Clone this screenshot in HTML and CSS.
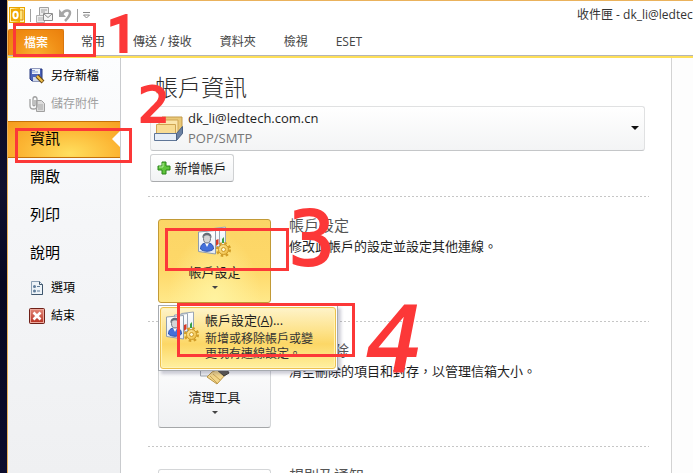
FILE: index.html
```html
<!DOCTYPE html>
<html lang="zh-Hant">
<head>
<meta charset="utf-8">
<title>收件匣 - dk_li@ledtech.com.cn</title>
<link rel="stylesheet" href="styles.css">
</head>
<body>
<svg class="defs" aria-hidden="true">
  <defs>
    <linearGradient id="cardFill" x1="0" y1="0" x2="0" y2="1"><stop offset="0" stop-color="#ffffff"/><stop offset="1" stop-color="#e4ebf4"/></linearGradient>
    <linearGradient id="goldFill" x1="0" y1="0" x2="1" y2="1"><stop offset="0" stop-color="#ffeaa0"/><stop offset="1" stop-color="#eebb3c"/></linearGradient>
    <linearGradient id="redFill" x1="0" y1="0" x2="0" y2="1"><stop offset="0" stop-color="#e58b7c"/><stop offset="1" stop-color="#b52c1d"/></linearGradient>
    <symbol id="accounts" viewBox="0 0 34 32">
      <path d="M15.500 2.500l12-1.500v18l-12 2z" fill="url(#cardFill)" stroke="#9aa6b5"/>
      <path d="M24 13l2-2v6h-2z" fill="#3ba044"/>
      <path d="M8.500 4l13-1.500v18l-13 2z" fill="url(#cardFill)" stroke="#9aa6b5"/>
      <path d="M18 14l2.500-1v5l-2.500 2z" fill="#d63b28"/>
      <path d="M.5 6l17-1.500v23.500l-17-2.500z" fill="url(#cardFill)" stroke="#8f9dae"/>
      <path d="M2.500 23c0-4 2-6 6.500-6s6.500 2 6.500 6c-3 3-10 3-13 0z" fill="#4470da" stroke="#2c52ad"/>
      <path d="M7 17h4l-2 4z" fill="#fff"/>
      <ellipse cx="9" cy="12.500" rx="3.500" ry="4.500" fill="#d4d4d6" stroke="#70757d"/>
      <path d="M4.500 12c-1-7 10-7 9 0-1-3-7-4-9 0z" fill="#666d77"/>
      <circle cx="25.500" cy="23.500" r="6.300" fill="none" stroke="#d19d28" stroke-width="2.500" stroke-dasharray="2.500 2.450"/>
      <circle cx="25.500" cy="23.500" r="5" fill="url(#goldFill)" stroke="#cd9823"/>
      <circle cx="25.500" cy="23.500" r="2" fill="#fff7d0" stroke="#cd9823"/>
    </symbol>
  </defs>
</svg>

<div class="window">
  <header class="titlebar">
    <div class="quick">
      <svg width="16" height="16" viewBox="0 0 16 16" aria-hidden="true">
        <rect x=".5" y=".5" width="15" height="15" fill="#fff3b5" stroke="#e9a400"/>
        <path d="M2 2l9-1v14l-9-1z" fill="#f0a800"/>
        <path d="M11 3h3v10h-3" fill="#ffe27a" stroke="#d99000"/>
        <ellipse cx="6.500" cy="8" rx="2.200" ry="3.200" fill="none" stroke="#fff" stroke-width="2"/>
      </svg>
      <i class="sep"></i>
      <button class="tool" aria-label="傳送/接收所有資料夾">
        <svg width="17" height="16" viewBox="0 0 17 16"><path d="M3.500.5h9v8h-9z" fill="#ededed" stroke="#a0a0a0"/><path d="M5 3h6M5 5h4" stroke="#a0a0a0"/><path d="M.5 8.500h8v7h-8z" fill="#ededed" stroke="#b0b0b0"/><path d="M2 11h5M2 13h5" stroke="#b0b0b0"/><path d="M7.500 6.500h9v7h-9z" fill="#f6f6f6" stroke="#8d8d8d"/><path d="M8 7l4 3.500L16 7" fill="none" stroke="#8d8d8d"/></svg>
      </button>
      <button class="tool" aria-label="復原">
        <svg width="14" height="14" viewBox="0 0 14 14"><path d="M4 6c3-5 8-4 8-1 0 3-2 5-5 8" fill="none" stroke="#a6a6a6" stroke-width="2.500"/><path d="M1 1v8h7z" fill="#a6a6a6"/></svg>
      </button>
      <i class="sep"></i>
      <button class="tool" aria-label="自訂快速存取工具列">
        <svg width="7" height="7" viewBox="0 0 7 7"><path d="M0 .5h7" stroke="#888"/><path d="M.5 3h6l-3 3z" fill="#fff" stroke="#888"/></svg>
      </button>
    </div>
    <div class="caption">收件匣 - dk_li@ledtech.com.cn</div>
  </header>

  <nav class="tabs">
    <button class="tab file">檔案</button>
    <button class="tab">常用</button>
    <button class="tab">傳送 / 接收</button>
    <button class="tab">資料夾</button>
    <button class="tab">檢視</button>
    <button class="tab">ESET</button>
  </nav>

  <div class="backstage">
    <aside class="side">
      <button class="cmd">
        <svg width="16" height="16" viewBox="0 0 16 16"><path d="M1 1h12v12H3l-2-2z" fill="#4a62b8" stroke="#26387f"/><path d="M3 1h8v5H3z" fill="#eef3fb"/><path d="M4 9h6v4H4z" fill="#cfd8ea"/><path d="M8 8l6 6" stroke="#6b4a12" stroke-width="4"/><path d="M8 8l5.500 5.500" stroke="#f0c04a" stroke-width="2"/><path d="M3 4h6M3 2.500h3" stroke="#8ba0d4"/></svg>
        另存新檔
      </button>
      <button class="cmd" disabled>
        <svg width="16" height="16" viewBox="0 0 16 16"><path d="M7.500 4.500h5l3 3v8h-8z" fill="#dcdcdc" stroke="#a0a0a0"/><path d="M9 9h5M9 11h5M9 13h5" stroke="#a8a8a8"/><path d="M1 3v7c0 4 7 4 7 0V3c0-3-4-3-4 0v6c0 1 2 1 2 0V4" fill="none" stroke="#a0a0a0" stroke-width="1.300"/></svg>
        儲存附件
      </button>
      <div class="places">
        <button class="place current">資訊</button>
        <button class="place">開啟</button>
        <button class="place">列印</button>
        <button class="place">說明</button>
      </div>
      <button class="cmd">
        <svg width="16" height="16" viewBox="0 0 16 16"><path d="M2.500 1.500h8l3 3v10h-11z" fill="#edf3f8" stroke="#8ba0b5"/><path d="M10.500 1.500v3h3v10h-11" fill="none" stroke="#3f566d"/><circle cx="5.500" cy="6.500" r="1.500" fill="#5f7d9b"/><circle cx="5.500" cy="11" r="1.500" fill="#5f7d9b"/><path d="M8 6.500h3M8 11h3" stroke="#5f7d9b"/></svg>
        選項
      </button>
      <button class="cmd">
        <svg width="16" height="16" viewBox="0 0 16 16"><rect x=".5" y=".5" width="15" height="15" rx="1" fill="url(#redFill)" stroke="#6e2018"/><rect x="1.500" y="1.500" width="13" height="13" fill="none" stroke="#eda89c"/><path d="M4.500 4.500l7 7M11.500 4.500l-7 7" stroke="#fff" stroke-width="2.600"/></svg>
        結束
      </button>
    </aside>

    <main class="main">
      <h1>帳戶資訊</h1>
      <button class="account" aria-haspopup="listbox">
        <svg width="30" height="32" viewBox="0 0 30 32"><path d="M8 5h20v15l-5 4H8z" fill="#e9c878" stroke="#c39a48"/><path d="M5 8h19v14H5z" fill="#fbe6ac" stroke="#cfa552"/><path d="M2.500 12.500h19V24h-19z" fill="#f8dc93" stroke="#cfa552"/><path d="M.5 21.500h22v7h-22z" fill="#e6eef8" stroke="#5f7697"/><path d="M22.500 21.500l6-7v7l-6 7z" fill="#6b81a2" stroke="#4b6183"/></svg>
        <span class="who"><span>dk_li@ledtech.com.cn</span><span class="kind">POP/SMTP</span></span>
        <i class="arrow large"></i>
      </button>
      <button class="add">
        <svg width="14" height="14" viewBox="0 0 14 14"><path d="M5 1h4v4h4v4H9v4H5V9H1V5h4z" fill="#5fc43c" stroke="#2b8419"/><path d="M6 2v4H2" fill="none" stroke="#b4ed99"/></svg>
        新增帳戶
      </button>

      <section class="item">
        <div class="anchor">
          <button class="big active" aria-expanded="true">
            <svg width="34" height="32" aria-hidden="true"><use href="#accounts"/></svg>
            帳戶設定
            <i class="arrow"></i>
          </button>
          <div class="menu" role="menu">
            <button class="menuitem" role="menuitem">
              <svg width="34" height="32" aria-hidden="true"><use href="#accounts"/></svg>
              <span class="menutext"><span class="menuname">帳戶設定(<u>A</u>)...</span><span class="menudesc">新增或移除帳戶或變更現有連線設定。</span></span>
            </button>
          </div>
        </div>
        <div class="info"><h2>帳戶設定</h2><p>修改此帳戶的設定並設定其他連線。</p></div>
      </section>

      <section class="item">
        <button class="big">
          <svg class="brush" width="34" height="32" viewBox="0 0 34 32" aria-hidden="true"><path d="M2.500 8h20v17h-20z" fill="#f2f3f5" stroke="#a0a6ae"/><path d="M14 21l11-5 3 7-9 10-10-7z" fill="#f3d68a" stroke="#b99445"/><path d="M12 25l7 7M15 23l7 6" stroke="#c9a454"/><path d="M18 18l7-6 6 10-5 3z" fill="#5c5950" stroke="#3f3d37"/></svg>
          清理工具
          <i class="arrow"></i>
        </button>
        <div class="info"><h2>信箱清除</h2><p>清空刪除的項目和封存，以管理信箱大小。</p></div>
      </section>

      <section class="item">
        <button class="big" aria-label="管理規則及通知"></button>
        <div class="info"><h2>規則及通知</h2></div>
      </section>
    </main>
    <div class="preview"></div>
  </div>
</div>

<div class="marks">
  <i class="box box1"></i><i class="box box2"></i><i class="box box3"></i><i class="box box4"></i>
  <span class="num num1">1</span><span class="num num2">2</span><span class="num num3">3</span><span class="num num4">4</span>
</div>
</body>
</html>
```
FILE: styles.css
```css
* { box-sizing: border-box; }

body {
  margin: 0;
  height: 100vh;
  padding-left: 7px;
  overflow: hidden;
  position: relative;
  background: linear-gradient(#08061c, #10102e 40%, #070720 60%, #0c0c2c);
  font: 12px/16px "Open Sans", "Noto Sans CJK TC", sans-serif;
  color: #1e1e1e;
}

button {
  font: inherit;
  color: inherit;
  background: none;
  border: 0;
  padding: 0;
  margin: 0;
  text-align: left;
}

svg { flex: none; display: block; }
h1, h2, p { margin: 0; font-weight: 400; }

.defs { position: absolute; width: 0; height: 0; }

.window {
  height: 100%;
  display: flex;
  flex-direction: column;
  border-top: 1px solid #eab25c;
  border-left: 1px solid #eab25c;
  background: #fff;
}

/* Title bar and ribbon tabs */
.titlebar {
  flex: none;
  height: 28px;
  display: flex;
  align-items: center;
  justify-content: space-between;
}
.quick { display: flex; align-items: center; gap: 5px; padding-left: 1px; }
.sep { width: 1px; height: 13px; background: #a0a0a0; }
.tool { display: flex; }
.caption {
  width: 116px;
  overflow: hidden;
  white-space: nowrap;
  color: #333;
}

.tabs {
  flex: none;
  height: 29px;
  display: flex;
  border-bottom: 2px solid #fedf58;
  box-shadow: inset 0 -1px #b5b5b5;
}
.tab { height: 26px; padding: 0 14px; color: #444; }
.tab.file {
  width: 56px;
  margin-right: 3px;
  padding: 0;
  text-align: center;
  font-weight: 500;
  color: #fff;
  border: 1px solid #d8760e;
  border-bottom: 0;
  border-radius: 2px 2px 0 0;
  background: radial-gradient(ellipse at 50% 100%, #f9b030, #f18f16 60%, #ea7f0c);
}

/* Backstage */
.backstage { flex: 1; min-height: 0; display: flex; }

.side {
  flex: none;
  width: 113px;
  padding-top: 4px;
  border-right: 1px solid #c9cbce;
  background: linear-gradient(#fcfdfe, #f5f6f8 40%, #eff0f2);
}
.cmd {
  width: 100%;
  height: 28px;
  display: flex;
  align-items: center;
  gap: 6px;
  padding-left: 21px;
  color: #000;
}
.cmd:disabled { color: #a0a0a0; }
.places { display: grid; gap: 1px; padding: 3px 0 2px; }
.place {
  height: 37px;
  padding: 0 0 3px 22px;
  font-size: 15px;
  line-height: 20px;
  color: #000;
}
.place.current {
  position: relative;
  border-top: 1px solid #c67208;
  border-bottom: 1px solid #c67208;
  background: radial-gradient(ellipse at 55% 90%, #ffdf5e, #fcb634 55%, #f59b1d);
}
.place.current::after {
  content: "";
  position: absolute;
  right: 0;
  top: 9px;
  border: 8px solid transparent;
  border-left: 0;
  border-right-color: #fff;
}

.main {
  flex: 1;
  min-width: 0;
  padding: 14px 22px 0 27px;
  overflow: hidden;
}
h1 {
  padding-left: 7px;
  font-size: 23px;
  line-height: 30px;
  font-weight: 300;
  color: #2b2b2b;
}
.account {
  width: calc(100% - 6px);
  height: 45px;
  margin: 4px 4px 3px 2px;
  padding: 0 5px 2px 3px;
  display: flex;
  align-items: center;
  gap: 4px;
  border: 1px solid #e0e1e2;
  border-bottom-color: #c4c6c8;
  border-radius: 3px;
  background: linear-gradient(#fff, #f3f4f5);
  font-size: 13px;
  line-height: 20px;
}
.who { flex: 1; display: grid; }
.kind { color: #777; }
.arrow {
  border: 3px solid transparent;
  border-top-color: #444;
  border-bottom: 0;
}
.arrow.large { border-width: 4px 4px 0; border-top-color: #111; }
.add {
  width: 84px;
  height: 28px;
  margin-left: 2px;
  padding-bottom: 1px;
  display: flex;
  align-items: center;
  justify-content: center;
  gap: 3px;
  border: 1px solid #cfd1d3;
  border-bottom-color: #a9abad;
  border-radius: 3px;
  background: linear-gradient(#fff, #f1f2f4);
  font-size: 13px;
}

.item {
  height: 125px;
  padding: 23px 0 0 10px;
  display: flex;
  gap: 18px;
  background: repeating-linear-gradient(90deg, #c6c6c6 0 2px, transparent 2px 4px) top / 100% 1px no-repeat;
}
.add + .item { margin-top: 14px; }
.anchor { position: relative; }
.big {
  flex: none;
  width: 113px;
  height: 84px;
  padding-top: 6px;
  display: flex;
  flex-direction: column;
  align-items: center;
  gap: 4px;
  border: 1px solid #d4d6d8;
  border-bottom-color: #a5a7a9;
  border-radius: 3px;
  background: linear-gradient(#fff, #f0f1f3);
  font-size: 13px;
  line-height: 20px;
}
.big.active {
  border-color: #c29a36;
  background: radial-gradient(ellipse at 50% 100%, #fff3a0, transparent 60%), linear-gradient(#fbd566, #fed869 60%, #ffe889);
}
.brush { overflow: visible; }
h2 { font-size: 15px; line-height: 20px; margin-top: -4px; color: #555; }
p { font-size: 13px; line-height: 22px; }

.menu {
  position: absolute;
  z-index: 1;
  left: 0;
  top: 86px;
  width: 180px;
  padding: 1px;
  border: 1px solid #a7abb0;
  background: #fff;
  box-shadow: 3px 3px 3px rgba(60, 60, 100, .25);
}
.menuitem {
  width: 100%;
  height: 62px;
  display: flex;
  gap: 5px;
  padding: 3px 16px 0 5px;
  border: 1px solid #ecc14e;
  border-radius: 3px;
  box-shadow: inset 0 0 0 1px #fff3b8;
  background: linear-gradient(#fef3c9, #fde288 40%, #fcd766 60%, #fff0a0);
}
.menutext { display: grid; align-content: start; }
.menuname { font-size: 13px; line-height: 18px; }
.menudesc { line-height: 15px; margin-top: 2px; color: #333; }

.preview {
  flex: none;
  width: 22px;
  border-left: 1px solid #d3d3d3;
  background: #fdfdfd;
}

/* Red marker annotations laid over the window */
.marks { position: absolute; inset: 0; pointer-events: none; z-index: 2; color: #fc3838; }
.box { position: absolute; border: 3px solid; }
.box1 { left: 13px; top: 23px; width: 83px; height: 34px; }
.box2 { left: 15px; top: 128px; width: 117px; height: 35px; }
.box3 { left: 165px; top: 228px; width: 124px; height: 43px; }
.box4 { left: 177px; top: 303px; width: 178px; height: 54px; }
.num {
  position: absolute;
  line-height: 1;
  font-family: "DejaVu Sans", sans-serif;
  -webkit-text-stroke: 2px;
  stroke-linejoin: round;
}
.num1 { left: 107px; top: 9px; font: 500 52px/1 Roboto, sans-serif; }
.num2 { left: 138px; top: 80px; font-size: 50px; }
.num3 { left: 288px; top: 202px; font-size: 74px; }
.num4 { left: 366px; top: 296px; font-size: 90px; font-style: oblique; }
```
